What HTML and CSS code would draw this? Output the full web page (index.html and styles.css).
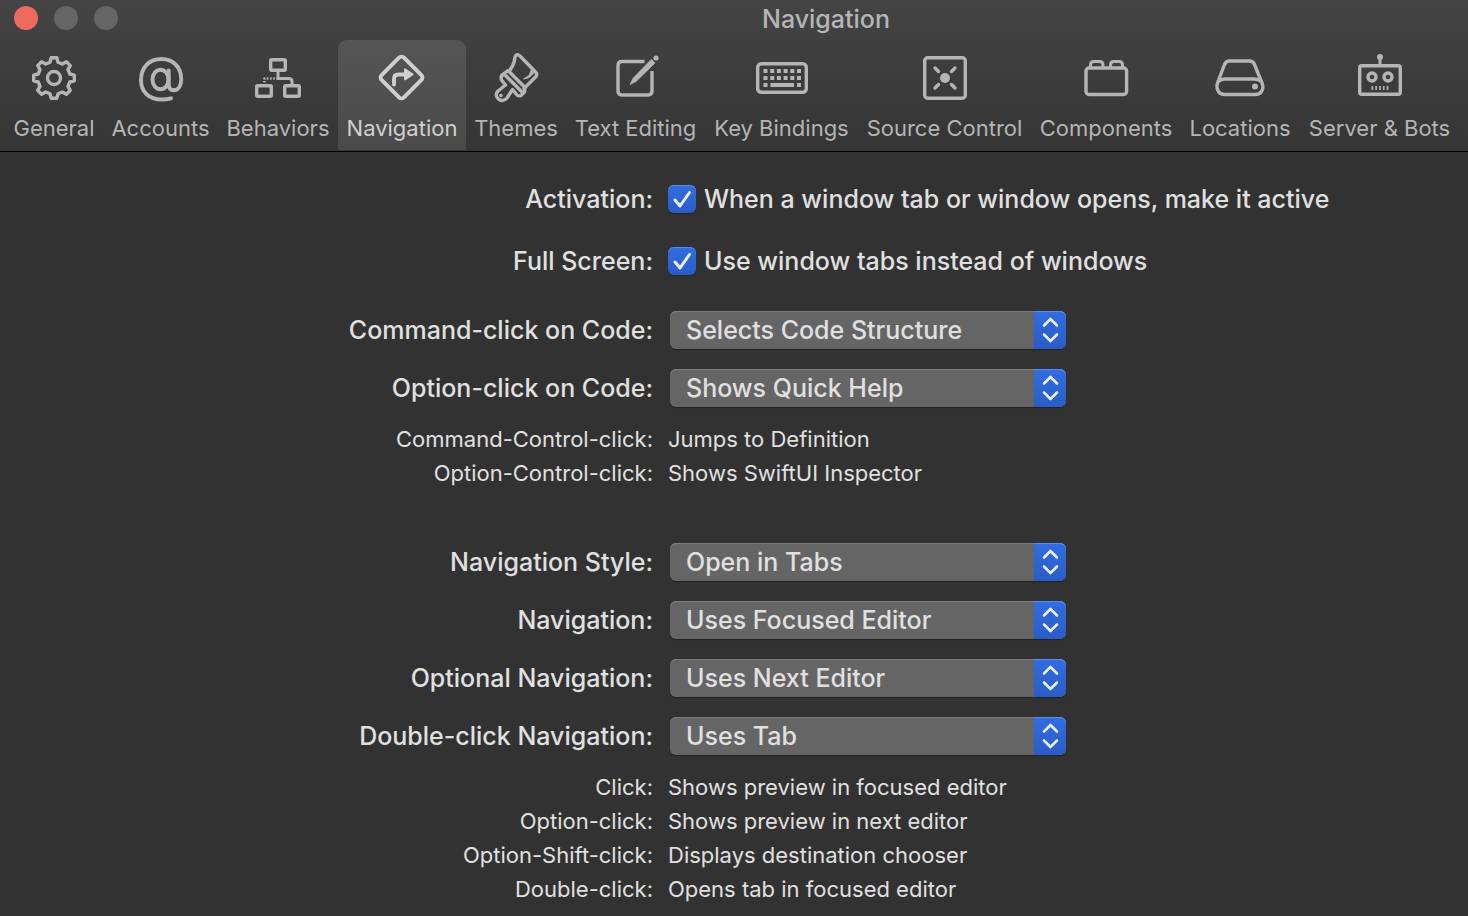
FILE: index.html
```html
<!DOCTYPE html>
<html lang="en">
<head>
<meta charset="utf-8">
<title>Navigation</title>
<link rel="stylesheet" href="styles.css">
</head>
<body>
<svg class="defs" width="0" height="0" aria-hidden="true">
  <symbol id="cap" viewBox="0 0 32 38"><path d="M10 14.500l6.500-6.500 6.500 6.500M10 23.500l6.500 6.500 6.500-6.500" fill="none" stroke="#e8eefb" stroke-width="2.600" stroke-linecap="round" stroke-linejoin="round"/></symbol>
</svg>
<header class="chrome">
  <div class="titlebar">
    <div class="lights">
      <button class="light close" aria-label="Close"></button>
      <button class="light" aria-label="Minimize"></button>
      <button class="light" aria-label="Zoom"></button>
    </div>
    <h1 class="title">Navigation</h1>
  </div>
  <nav class="toolbar">
    <button class="tool">
      <svg class="icon" viewBox="0 0 56 56"><path d="M25.200 7.700h5.600L32 12.200 36.300 14 40.400 11.700 44.300 15.600 42 19.700 43.800 24 48.300 25.200v5.600L43.800 32 42 36.300 44.300 40.400 40.400 44.300 36.300 42 32 43.800 30.800 48.300h-5.600L24 43.800 19.700 42 15.600 44.300 11.700 40.400 14 36.300 12.200 32 7.700 30.800v-5.600L12.200 24 14 19.700 11.700 15.600 15.600 11.700 19.700 14 24 12.200z"/><circle cx="28" cy="28" r="6.500"/></svg>
      <span>General</span>
    </button>
    <button class="tool">
      <svg class="icon bold" viewBox="0 0 56 56"><ellipse cx="27.500" cy="29.500" rx="8" ry="9.800"/><path d="M35.700 20.500v13.500c0 4 2 6.200 5 6.200 5 0 7.500-5 7.500-11.200C48.200 17 40 9 28.500 9 16 9 8 17.500 8 30c0 12 8 19.500 20.500 19.500 4 0 7-.4 9.500-1.200"/></svg>
      <span>Accounts</span>
    </button>
    <button class="tool">
      <svg class="icon" viewBox="0 0 56 56"><rect x="20.700" y="9.700" width="14.600" height="10.600" rx="1"/><rect x="6.700" y="35.700" width="14.600" height="10.600" rx="1"/><rect x="34.700" y="35.700" width="14.600" height="10.600" rx="1"/><path d="M28 21v7.500M28 28.500h11q3 0 3 3V35" stroke-width="3"/><path d="M28 28.500H14.500V35" stroke-width="2.600" stroke-linecap="butt" stroke-dasharray="1.600 1.600"/></svg>
      <span>Behaviors</span>
    </button>
    <button class="tool selected" aria-pressed="true">
      <svg class="icon bold" viewBox="0 0 56 56"><rect x="11.700" y="11.700" width="31.600" height="31.600" rx="3.500" transform="rotate(45 27.500 27.500)"/><path d="M20 34.500V29q0-4.500 4.500-4.500H32"/><path class="solid" d="M31 19.300l7.500 5-7.500 5z" stroke-width="2"/></svg>
      <span>Navigation</span>
    </button>
    <button class="tool">
      <svg class="icon" viewBox="0 0 56 56"><path d="M20.500 21.500c4-4 6-9 6.500-14.500q1.500-4 5-1L48 22.500q1.500 2 0 4L36 38.500"/><path d="M16 23.500L20 20.500 37 37.500 36.500 42 33 45.500Q31 46.500 29 45L24.500 39.500 19 48q-3.500 4-8 1.500-5-4-1-8.500L17.500 35 13.500 30Q12 26 16 23.500zM16 24L35 43"/><circle class="solid dot" cx="13" cy="45.500" r="1.800"/><path class="solid" d="M43.500 19.500L41 25.500 35.500 29Q41 29 45.500 23.500z" stroke-width="1"/></svg>
      <span>Themes</span>
    </button>
    <button class="tool">
      <svg class="icon" viewBox="0 0 56 56"><path d="M36.500 11.500H14q-4 0-4 4V41q0 4 4 4h26q4 0 4-4V21" stroke-linecap="butt"/><path class="solid" d="M43.500 9.500l3.500 3.500L28 31.500 22 34.500l3-6z" stroke-width=".8"/><circle class="solid dot" cx="48" cy="8" r="2.600"/></svg>
      <span>Text Editing</span>
    </button>
    <button class="tool">
      <svg class="icon" viewBox="0 0 56 56"><rect x="3.700" y="13.700" width="48.600" height="28.600" rx="3.500"/><path d="M9.500 21h37.500M9.500 28h37.500" stroke-width="4" stroke-linecap="butt" stroke-dasharray="4 2.700"/><path d="M9.500 35h4M16.500 35h23.500M43 35h4" stroke-width="4" stroke-linecap="butt"/></svg>
      <span>Key Bindings</span>
    </button>
    <button class="tool">
      <svg class="icon" viewBox="0 0 56 56"><rect x="7.700" y="7.700" width="40.600" height="40.600" rx="3"/><circle class="solid dot" cx="28" cy="28" r="5"/><path d="M18 18l3.500 3.500M38 18l-3.500 3.500M18 38l3.500-3.500M38 38l-3.500-3.500"/></svg>
      <span>Source Control</span>
    </button>
    <button class="tool">
      <svg class="icon" viewBox="0 0 56 56"><rect x="8" y="18" width="40.600" height="26.500" rx="3"/><path d="M12.500 17.500V15q0-3.500 3.500-3.500h5.500q3.500 0 3.500 3.500v2.500M32.500 17.500V15q0-3.500 3.500-3.500h5q3.500 0 3.500 3.500v2.500" stroke-width="3"/></svg>
      <span>Components</span>
    </button>
    <button class="tool">
      <svg class="icon" viewBox="0 0 56 56"><path d="M5.500 33L12.500 14.500q1.500-3.500 5-3.500h20q3.500 0 5 3.500L50 33q2 5-.5 8.500-2 3-6 3h-31q-4 0-6-3Q4 38 5.500 33zM7 31q2-2 6-2h29.500q4 0 6 2"/><circle class="solid dot" cx="43" cy="36.500" r="3"/></svg>
      <span>Locations</span>
    </button>
    <button class="tool">
      <svg class="icon" viewBox="0 0 56 56"><rect x="7.700" y="15.700" width="40.600" height="28.600" rx="2"/><path d="M28 15V8" stroke-width="3"/><circle class="solid dot" cx="28" cy="7" r="3"/><circle cx="20" cy="27" r="4"/><circle cx="36" cy="27" r="4"/><path d="M19.500 38h18" stroke-width="4" stroke-linecap="butt" stroke-dasharray="1.700 2.100"/></svg>
      <span>Server &amp; Bots</span>
    </button>
  </nav>
</header>
<main class="settings">
  <section class="group">
    <div class="row check-row">
      <span class="name">Activation:</span>
      <label class="check"><input type="checkbox" checked><svg class="tick" viewBox="0 0 28 28"><path d="M7 15l5 6 9.500-13.500"/></svg>When a window tab or window opens, make it active</label>
    </div>
    <div class="row check-row">
      <span class="name">Full Screen:</span>
      <label class="check"><input type="checkbox" checked><svg class="tick" viewBox="0 0 28 28"><path d="M7 15l5 6 9.500-13.500"/></svg>Use window tabs instead of windows</label>
    </div>
  </section>
  <section class="group clicks">
    <div class="row"><label class="name" for="cmd">Command-click on Code:</label><div class="popup"><select id="cmd"><option>Selects Code Structure</option></select><svg class="cap"><use href="#cap"/></svg></div></div>
    <div class="row"><label class="name" for="opt">Option-click on Code:</label><div class="popup"><select id="opt"><option>Shows Quick Help</option></select><svg class="cap"><use href="#cap"/></svg></div></div>
    <dl class="notes">
      <div class="note"><dt>Command-Control-click:</dt><dd>Jumps to Definition</dd></div>
      <div class="note"><dt>Option-Control-click:</dt><dd>Shows SwiftUI Inspector</dd></div>
    </dl>
  </section>
  <section class="group styles">
    <div class="row"><label class="name" for="style">Navigation Style:</label><div class="popup"><select id="style"><option>Open in Tabs</option></select><svg class="cap"><use href="#cap"/></svg></div></div>
    <div class="row"><label class="name" for="nav">Navigation:</label><div class="popup"><select id="nav"><option>Uses Focused Editor</option></select><svg class="cap"><use href="#cap"/></svg></div></div>
    <div class="row"><label class="name" for="optnav">Optional Navigation:</label><div class="popup"><select id="optnav"><option>Uses Next Editor</option></select><svg class="cap"><use href="#cap"/></svg></div></div>
    <div class="row"><label class="name" for="dbl">Double-click Navigation:</label><div class="popup"><select id="dbl"><option>Uses Tab</option></select><svg class="cap"><use href="#cap"/></svg></div></div>
    <dl class="notes">
      <div class="note"><dt>Click:</dt><dd>Shows preview in focused editor</dd></div>
      <div class="note"><dt>Option-click:</dt><dd>Shows preview in next editor</dd></div>
      <div class="note"><dt>Option-Shift-click:</dt><dd>Displays destination chooser</dd></div>
      <div class="note"><dt>Double-click:</dt><dd>Opens tab in focused editor</dd></div>
    </dl>
  </section>
</main>
</body>
</html>
```
FILE: styles.css
```css
* { box-sizing: border-box; }
body {
  margin: 0;
  background: #323232;
  color: #e0e0e0;
  font-family: Inter, "Liberation Sans", sans-serif;
  font-size: 25px;
  font-weight: 500;
  line-height: 32px;
}
button, select, input { font: inherit; color: inherit; margin: 0; }
.defs { display: block; }
.chrome {
  background: linear-gradient(#444, #353535);
  border-bottom: 1px solid #000;
  padding-bottom: 1px;
}
.titlebar { display: flex; align-items: center; height: 40px; padding-bottom: 4px; }
.lights { display: flex; gap: 16px; width: 184px; padding-left: 14px; }
.light { width: 24px; height: 24px; padding: 0; border: 0; border-radius: 50%; background: #656565; }
.close { background: #ee6a5f; }
.title { flex: 1; margin: 0; padding-top: 2px; text-align: center; font-size: 25px; font-weight: 500; color: #b5b5b5; }
.toolbar {
  display: grid;
  grid-template-columns: 98fr 115fr 120fr 128fr 100fr 139fr 153fr 173fr 150fr 118fr 161fr;
  padding: 0 8px 0 5px;
}
.tool {
  display: flex;
  flex-direction: column;
  align-items: center;
  gap: 8px;
  min-width: 0;
  padding: 10px 0 8px;
  border: 0;
  border-radius: 9px 9px 0 0;
  background: none;
  color: #b5b5b5;
  font-size: 22px;
  font-weight: 400;
  line-height: 28px;
  white-space: nowrap;
}
.selected { background: linear-gradient(#555, #4a4a4a); color: #d0d0d0; }
.icon {
  width: 56px;
  height: 56px;
  fill: none;
  stroke: currentColor;
  stroke-width: 3.4;
  stroke-linecap: round;
  stroke-linejoin: round;
}
.bold { stroke-width: 3.9; }
.icon .solid { fill: currentColor; }
.icon .dot { stroke: none; }
.settings { padding: 16px 0 10px; }
.row, .note {
  display: grid;
  grid-template-columns: 653fr 800fr;
  column-gap: 15px;
  align-items: center;
  min-height: 58px;
}
.check-row { min-height: 62px; }
.name, dt { text-align: right; white-space: nowrap; }
.clicks { padding-top: 9px; }
.styles { padding-top: 43px; }
.check { display: flex; align-items: center; position: relative; white-space: nowrap; }
.check input {
  appearance: none;
  width: 28px;
  height: 28px;
  margin-right: 8px;
  border-radius: 6px;
  background: linear-gradient(#326de0, #2a5cc6);
  box-shadow: inset 0 1px #5b8ae8, 0 1px 1px #222;
}
.tick {
  position: absolute;
  left: 0;
  width: 28px;
  height: 28px;
  fill: none;
  stroke: #e8eefb;
  stroke-width: 3;
  stroke-linecap: round;
  stroke-linejoin: round;
}
.popup { position: relative; width: 396px; margin-left: 2px; }
.popup select {
  display: block;
  appearance: none;
  width: 100%;
  height: 38px;
  padding: 0 40px 0 16px;
  border: 0;
  border-radius: 6px;
  background: #656565;
  box-shadow: inset 0 1px #7c7c7c, 0 1px 1px #222;
}
.cap {
  position: absolute;
  top: 0;
  right: 0;
  width: 32px;
  height: 38px;
  border-radius: 0 6px 6px 0;
  background: linear-gradient(#326de0, #2a5cc6);
  box-shadow: inset 0 1px #5b8ae8;
  pointer-events: none;
}
.notes { margin: 0; padding-top: 5px; font-size: 22px; font-weight: 400; }
.note { min-height: 34px; }
dd { margin: 0; white-space: nowrap; }
```
